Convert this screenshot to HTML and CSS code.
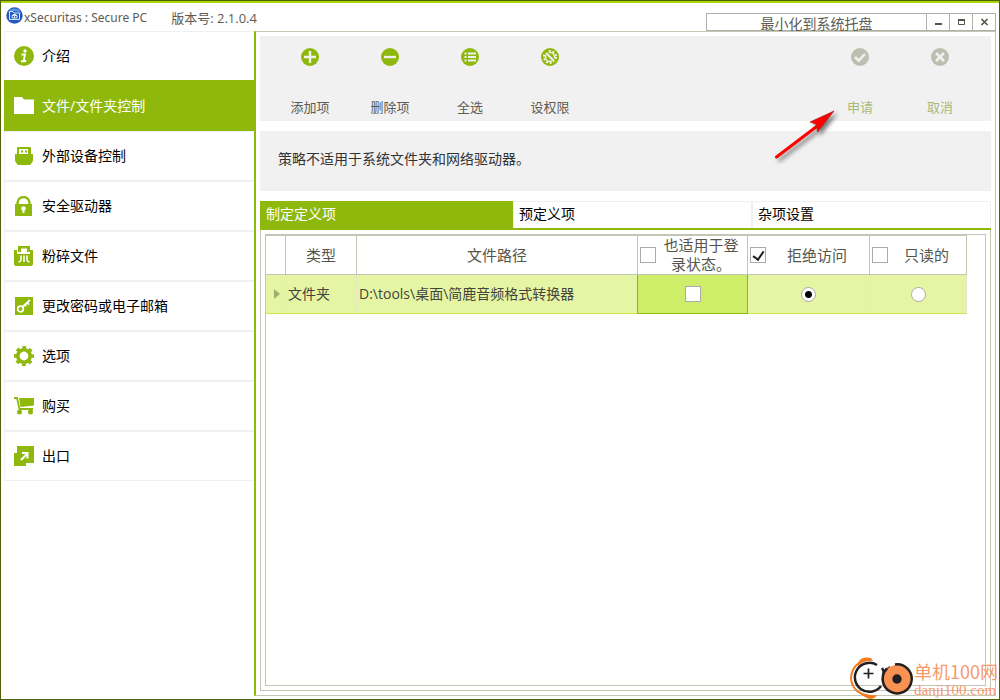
FILE: index.html
```html
<!DOCTYPE html>
<html lang="zh-CN">
<head>
<meta charset="utf-8">
<title>xSecuritas : Secure PC</title>
<link rel="stylesheet" href="styles.css">
</head>
<body>
<div class="window">
  <header class="titlebar">
    <svg class="logo" width="17" height="17" viewBox="0 0 17 17"><circle cx="8.500" cy="8.500" r="8.200" fill="#2458bd"/><path d="M2 6a7 7 0 0 1 13 0Q8 2 2 6Z" fill="#5b91e5"/><path d="M3.500 12.500v-8h3.500l1 1.500h5.500v6.500z" fill="#2458bd" stroke="#d8e6ff"/><path d="M6 8.500h5v2.500H6zM7 8.500V7.500h3v1M8.500 9v2" fill="none" stroke="#d8e6ff"/></svg>
    <h1 class="title">xSecuritas : Secure PC</h1>
    <span class="version">版本号: 2.1.0.4</span>
    <div class="winbuttons">
      <button class="tray" type="button">最小化到系统托盘</button>
      <button class="winbtn" type="button" aria-label="最小化"><svg width="11" height="11" viewBox="0 0 11 11"><path d="M2 7h7" stroke="#555549" stroke-width="2"/></svg></button>
      <button class="winbtn" type="button" aria-label="最大化"><svg width="11" height="11" viewBox="0 0 11 11"><path d="M2.500 3v4.500h6V3" fill="none" stroke="#555549"/><path d="M2 3h7" stroke="#555549" stroke-width="2"/></svg></button>
      <button class="winbtn" type="button" aria-label="关闭"><svg width="11" height="11" viewBox="0 0 11 11"><path d="M2.500 2l6 6m0-6l-6 6" stroke="#555549" stroke-width="1.700"/></svg></button>
    </div>
  </header>
  <div class="body">
    <nav class="sidebar">
      <a class="item" href="#intro"><svg class="icon" viewBox="0 0 20 20"><circle cx="10" cy="10" r="10"/><circle class="w" cx="11" cy="5" r="1.700"/><path d="M7.500 8.500h3.500l-1.300 6.500h2.500M7 15.200h4" fill="none" stroke="#fff" stroke-width="1.900"/></svg>介绍</a>
      <a class="item active" href="#files"><svg class="icon" viewBox="0 0 20 20"><path class="w" d="M0 1h8l2 2.500h10V18H0z"/></svg>文件/文件夹控制</a>
      <a class="item" href="#devices"><svg class="icon" viewBox="0 0 20 20"><path d="M4 1h12q1 0 1 1v6h2v6q0 2-2 4l-1 1H4l-1-1q-2-2-2-4V8h2V2q0-1 1-1z"/><path class="w" d="M5 3h9v5H5z"/><path d="M7 4.500h2v2H7zM11 4.500h2v2h-2z"/></svg>外部设备控制</a>
      <a class="item" href="#vault"><svg class="icon" viewBox="0 0 20 20"><path d="M3.500 9V7a6 6 0 0 1 12 0v2" fill="none" stroke="#8fb80c" stroke-width="2.400"/><path d="M1 8h17v12H1z"/><circle class="w" cx="9.500" cy="12.500" r="2.300"/><path class="w" d="M8.500 13h2v4h-2z"/></svg>安全驱动器</a>
      <a class="item" href="#shred"><svg class="icon" viewBox="0 0 20 20"><path d="M0 4h3v4h13V4h3v14q0 2-2 2H2q-2 0-2-2z"/><path d="M4 0h12v6h-3V2.500H7V6H4z"/><path d="M7 9.500v4q0 2-2.500 2.500M10 9.500V16M13 9.500v4q0 2 2.500 2.500" fill="none" stroke="#fff" stroke-width="1.500"/></svg>粉碎文件</a>
      <a class="item" href="#password"><svg class="icon" viewBox="0 0 20 20"><path d="M1 1h18v18H1z"/><circle cx="6.500" cy="13" r="2.800" fill="none" stroke="#fff" stroke-width="1.800"/><path d="M8.500 11L16 4M13 6.500l2 2.200M10.800 8.500l1.500 1.700" fill="none" stroke="#fff" stroke-width="1.800"/></svg>更改密码或电子邮箱</a>
      <a class="item" href="#options"><svg class="icon" viewBox="0 0 20 20"><circle cx="10" cy="10" r="6.200" fill="none" stroke="#8fb80c" stroke-width="3.600"/><circle cx="10" cy="10" r="8.400" fill="none" stroke="#8fb80c" stroke-width="3.200" stroke-dasharray="3.600 2.997" stroke-dashoffset="1.800"/></svg>选项</a>
      <a class="item" href="#buy"><svg class="icon" viewBox="0 0 20 20"><path d="M0 2h3l2.500 11H19" fill="none" stroke="#8fb80c" stroke-width="1.800"/><path d="M5 2h15v7.500L6.500 11z"/><circle cx="5.500" cy="16" r="2.500"/><circle cx="16.500" cy="16" r="2.500"/></svg>购买</a>
      <a class="item" href="#exit"><svg class="icon" viewBox="0 0 20 20"><path d="M3 0h17v17h-8v3H0V7h3z"/><path d="M7 14l6-6M8 7h5.500v5.500" fill="none" stroke="#fff" stroke-width="2"/></svg>出口</a>
    </nav>
    <main class="main">
      <div class="toolbar">
        <button class="tool" type="button"><svg class="ticon" viewBox="0 0 18 18"><circle cx="9" cy="9" r="9"/><path class="g" d="M9 3v12M3 9h12" stroke-width="2.400"/></svg>添加项</button>
        <button class="tool" type="button"><svg class="ticon" viewBox="0 0 18 18"><circle cx="9" cy="9" r="9"/><path class="g" d="M3 9h12" stroke-width="2.400"/></svg>删除项</button>
        <button class="tool" type="button"><svg class="ticon" viewBox="0 0 18 18"><circle cx="9" cy="9" r="9"/><path class="g" d="M3.500 5.500h2M3.500 9h2M3.500 12.500h2M7 5.500h8M7 9h8M7 12.500h8" stroke-width="1.800"/></svg>全选</button>
        <button class="tool" type="button"><svg class="ticon" viewBox="0 0 18 18"><circle cx="9" cy="9" r="9"/><circle class="g" cx="9" cy="9" r="4.500" stroke-width="1.400"/><circle class="g" cx="9" cy="9" r="6" stroke-width="2" stroke-dasharray="1.880 1.890"/><path d="M4 3.500l10 10" stroke="#8fb80c" stroke-width="3.500"/><path class="g" d="M5 5l8 8" stroke-width="2"/></svg>设权限</button>
        <button class="tool push" type="button" disabled><svg class="ticon" viewBox="0 0 18 18"><circle cx="9" cy="9" r="9"/><path class="g" d="M4 9l3.700 3.700L14 6" stroke-width="2.500"/></svg>申请</button>
        <button class="tool" type="button" disabled><svg class="ticon" viewBox="0 0 18 18"><circle cx="9" cy="9" r="9"/><path class="g" d="M5 5l8 8m0-8l-8 8" stroke-width="2.500"/></svg>取消</button>
      </div>
      <p class="notice">策略不适用于系统文件夹和网络驱动器。</p>
      <div class="tabs" role="tablist">
        <button class="tab selected" type="button" role="tab" aria-selected="true">制定定义项</button>
        <button class="tab" type="button" role="tab" aria-selected="false">预定义项</button>
        <button class="tab" type="button" role="tab" aria-selected="false">杂项设置</button>
      </div>
      <section class="panel">
        <div class="grid">
          <table class="table">
            <colgroup><col class="c-mark"><col class="c-type"><col class="c-path"><col class="c-login"><col class="c-deny"><col class="c-read"></colgroup>
            <thead>
              <tr>
                <th></th>
                <th>类型</th>
                <th>文件路径</th>
                <th><label class="head"><input class="check" type="checkbox"><span class="text">也适用于登录状态。</span></label></th>
                <th><label class="head"><input class="check" type="checkbox" checked><span class="text">拒绝访问</span></label></th>
                <th><label class="head"><input class="check" type="checkbox"><span class="text">只读的</span></label></th>
              </tr>
            </thead>
            <tbody>
              <tr>
                <td class="mark"><svg class="pointer" width="6" height="10" viewBox="0 0 6 10"><path d="M0 0l6 5-6 5z" fill="#9eaf70"/></svg></td>
                <td>文件夹</td>
                <td>D:\tools\桌面\简鹿音频格式转换器</td>
                <td class="center focus"><input class="check" type="checkbox" aria-label="也适用于登录状态"></td>
                <td class="center"><input class="radio" type="radio" name="mode" aria-label="拒绝访问" checked></td>
                <td class="center"><input class="radio" type="radio" name="mode" aria-label="只读的"></td>
              </tr>
            </tbody>
          </table>
        </div>
      </section>
    </main>
  </div>
  <svg class="arrow" width="70" height="64" viewBox="0 0 70 64"><g class="arrow-shape"><path d="M6.500 57L48 25.500" stroke="#f00" stroke-width="3" stroke-linecap="round"/><path d="M64 11L40 22l6.500 2.500 1 7.500z" fill="#f00" stroke="#a22" stroke-width=".7"/></g></svg>
  <div class="watermark">
    <svg class="wm-logo" width="66" height="44" viewBox="0 0 66 44"><path d="M22 4.500Q4 7 3 23q1 15 18 18" fill="none" stroke="#f47b20" stroke-width="2"/><path d="M10 8Q13 1 23 3l2 3q-9-1-15 5zM8 34q8 7 21 6-2 4-7 4-8-2-14-10z" fill="#f47b20"/><path d="M29 10A14.500 14.500 0 1 0 33 31" fill="none" stroke="#231f20" stroke-width="2.500"/><path d="M34 13q3 4 1 12M37 18q2-4 5-6" fill="none" stroke="#231f20" stroke-width="2.500"/><path d="M20.500 13.500v10M15.500 18.500h10" stroke="#231f20" stroke-width="1.700"/><circle cx="49" cy="24" r="14" fill="#f99152"/><path d="M47 9.500a14.500 14.500 0 1 1-8 4" fill="none" stroke="#231f20" stroke-width="2.500"/><circle cx="49" cy="24" r="4.700" fill="#231f20"/></svg>
    <div class="wm-text"><span class="wm-name">单机100网</span><span class="wm-url">danji100.com</span></div>
  </div>
</div>
</body>
</html>
```
FILE: styles.css
```css
* { box-sizing: border-box; }
body {
  margin: 0;
  font-family: "Open Sans", "Noto Sans CJK SC", sans-serif;
  font-size: 14px;
  line-height: 20px;
  color: #000;
}
button {
  font: inherit;
  color: inherit;
  background: none;
  border: 0;
  padding: 0;
}
.window {
  position: relative;
  display: flex;
  flex-direction: column;
  min-height: 100vh;
  padding: 0 3px 3px;
  background: #fff;
  border: 1px solid #4f6304;
  box-shadow: inset 0 2px #a9d70b;
}
.titlebar {
  display: flex;
  align-items: center;
  height: 30px;
  color: #5c5c52;
}
.logo {
  margin: 0 0 2px 2px;
}
.title {
  margin: 3px 0 0 1px;
  font-family: "Noto Sans", sans-serif;
  font-size: 12px;
  font-weight: 400;
  word-spacing: normal;
}
.version {
  margin: 3px 0 0 24px;
  font-size: 13px;
}
.winbuttons {
  display: flex;
  align-self: flex-end;
  height: 18px;
  margin-left: auto;
  border: 1px solid #b0b0a8;
}
.tray {
  width: 219px;
  height: 16px;
  padding-top: 1px;
  line-height: 18px;
  color: #5c5c52;
}
.winbtn {
  display: flex;
  align-items: center;
  justify-content: center;
  width: 23px;
  border-left: 1px solid #b0b0a8;
}
.body {
  display: flex;
  flex: 1;
}
.sidebar {
  flex: none;
  width: 250px;
}
.item {
  display: flex;
  align-items: center;
  gap: 8px;
  height: 50px;
  padding-left: 9px;
  color: #000;
  text-decoration: none;
  border: 1px solid #f0f0f0;
  border-right: 0;
}
.item.active {
  color: #fff;
  background: #8fb80c;
  border-color: #8fb80c;
  box-shadow: 0 -1px #8fb80c;
}
.icon {
  width: 20px;
  height: 20px;
  fill: #8fb80c;
}
.icon .w { fill: #fff; }
.main {
  display: flex;
  flex: 1;
  flex-direction: column;
  min-width: 0;
  padding: 4px;
  border: 1px solid #c3c5b5;
  border-left: 2px solid #8fb80c;
}
.toolbar {
  display: flex;
  height: 85px;
  padding: 0 11px 0 10px;
  background: #f1f1f1;
}
.tool {
  display: flex;
  flex-direction: column;
  align-items: center;
  justify-content: space-between;
  width: 80px;
  padding: 12px 0 4px;
  font-size: 13px;
  color: #5c5c52;
}
.tool.push { margin-left: auto; }
.tool:disabled { color: #aab974; }
.ticon {
  width: 18px;
  height: 18px;
  fill: #8fb80c;
}
.ticon .g {
  fill: none;
  stroke: #f1f1f1;
}
.tool:disabled .ticon { fill: #bdbfb0; }
.notice {
  height: 60px;
  margin: 10px 0;
  padding: 18px;
  background: #f1f1f1;
  color: #333;
}
.tabs {
  display: grid;
  grid-template-columns: 253fr 239fr 239fr;
  height: 29px;
  border-bottom: 2px solid #8fb80c;
}
.tab {
  padding: 0 5px 2px;
  text-align: left;
  border: 1px solid #f0f0f0;
  border-bottom: 0;
}
.tab.selected {
  color: #fff;
  background: #8fb80c;
  border-color: #8fb80c;
}
.panel {
  display: flex;
  flex: 1;
  padding: 4px;
  border: 1px solid #c3c5b5;
  border-top: 0;
}
.grid {
  flex: 1;
  border: 1px solid #c3c5b5;
}
.table {
  width: 701px;
  table-layout: fixed;
  border-spacing: 0;
}
.c-mark { width: 20px; }
.c-type { width: 71px; }
.c-path { width: 281px; }
.c-login { width: 110px; }
.c-deny { width: 122px; }
.c-read { width: 97px; }
.table th {
  height: 40px;
  padding: 0;
  font-size: 15px;
  font-weight: 400;
  color: #55554b;
  border: 1px solid #c3c5b5;
  border-left: 0;
}
.head {
  display: flex;
  align-items: center;
  gap: 4px;
  padding: 0 5px 0 2px;
  line-height: 19px;
}
.text { flex: 1; }
.table td {
  height: 39px;
  padding: 0 2px;
  background: #e5f5a4;
  color: #44443a;
  border-right: 1px solid #e5e9cb;
  border-bottom: 1px solid #c9e650;
}
.table .mark { padding-left: 8px; }
.pointer { display: block; }
.table .center { text-align: center; }
.table .focus {
  background: #ceed69;
  border: 1px solid #8fb80c;
  border-top: 0;
  box-shadow: -1px 0 #8fb80c;
  border-left: 0;
}
.check, .radio {
  display: block;
  flex: none;
  appearance: none;
  width: 16px;
  height: 16px;
  margin: 0;
  background: #fff;
  border: 1px solid #aaa;
}
.center .check, .center .radio { margin: 0 auto; }
.check:checked::before {
  content: "";
  display: block;
  width: 5px;
  height: 9px;
  margin: 1px 0 0 4px;
  border: solid #222;
  border-width: 0 2px 2px 0;
  transform: rotate(35deg);
}
.radio {
  width: 15px;
  height: 15px;
  border-radius: 50%;
}
.radio:checked {
  background: radial-gradient(circle, #000 0 3px, #fff 4px);
}
.arrow {
  position: absolute;
  top: 99px;
  right: 159px;
}
.arrow-shape { filter: drop-shadow(3px 3px 2px #777); }
.watermark {
  position: absolute;
  right: 1px;
  bottom: 0;
  display: flex;
  align-items: flex-end;
  color: #f7996a;
}
.wm-text {
  display: flex;
  flex-direction: column;
}
.wm-name {
  font-family: "Noto Sans CJK SC", sans-serif;
  font-size: 18px;
  line-height: 20px;
}
.wm-url {
  font-family: "Liberation Serif", serif;
  font-size: 15px;
  line-height: 18px;
}
```
